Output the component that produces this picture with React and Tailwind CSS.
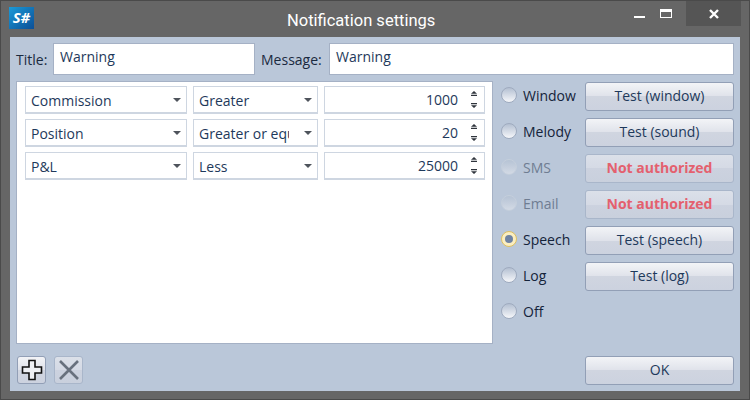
const rows = [
  { field: "Commission", op: "Greater", value: "1000" },
  { field: "Position", op: "Greater or equ", value: "20" },
  { field: "P&L", op: "Less", value: "25000" },
];

const channels = [
  { label: "Window", button: "Test (window)" },
  { label: "Melody", button: "Test (sound)" },
  { label: "SMS", button: "Not authorized", disabled: true },
  { label: "Email", button: "Not authorized", disabled: true },
  { label: "Speech", button: "Test (speech)", checked: true },
  { label: "Log", button: "Test (log)" },
  { label: "Off" },
];

function Caret() {
  return <span className="w-0 h-0 border-x-[4px] border-x-transparent border-t-[4px] border-t-[#4f545c] shrink-0" />;
}

function Select({ text, className }) {
  return (
    <div className={`h-[28px] flex items-center bg-white border border-[#ced6e1] border-b-2 pl-[5px] pr-[5px] ${className}`}>
      <span className="flex-1 overflow-hidden whitespace-nowrap text-[#1e395b] pt-[1px]">{text}</span>
      <span className="w-[15px] shrink-0" />
      <Caret />
    </div>
  );
}

function Spinner({ value }) {
  return (
    <div className="w-[161px] h-[28px] flex items-center bg-white border border-[#ced6e1] border-b-2 pr-[6px] text-[#1e395b]">
      <span className="flex-1 text-right pr-[12px]">{value}</span>
      <div className="flex flex-col items-center gap-[7px]">
        <svg width="8" height="5" viewBox="0 0 8 5"><path d="M4 0L7 2.8H1Z M1 3.8H7V5H1Z" fill="#2f343c" /></svg>
        <svg width="8" height="5" viewBox="0 0 8 5"><path d="M1 0H7V1.2H1Z M1 2.2H7L4 5Z" fill="#2f343c" /></svg>
      </div>
    </div>
  );
}

function Radio({ checked, disabled }) {
  return (
    <span
      className={`w-[16px] h-[16px] mt-[5px] rounded-full flex items-center justify-center shrink-0 border ${
        checked
          ? "border-[#dcbf62] bg-[#fbeec0]"
          : disabled
          ? "border-[#c5cfdc] bg-gradient-to-b from-[#b6c3d5] to-[#d3dae5]"
          : "border-[#9fabbf] bg-gradient-to-b from-[#b4c0d2] to-[#f6f7fa]"
      }`}
    >
      {checked && <span className="w-[8px] h-[8px] rounded-full bg-[#6f83a3]" />}
    </span>
  );
}

function Button({ children, disabled, danger }) {
  return (
    <button
      className={`w-[149px] h-[29px] pb-[2px] rounded-[3px] border leading-none ${
        disabled
          ? "border-[#a9b6ca] bg-[linear-gradient(#dbe0e9,#d5dae5_50%,#ccd2df_50%,#c9d0dd)]"
          : "border-[#929fb6] bg-[linear-gradient(#f3f4f7,#dfe2ea_50%,#d0d5e0_50%,#ccd2df)]"
      } ${danger ? "text-[#e4606e] font-bold" : "text-[#1e395b]"}`}
    >
      {children}
    </button>
  );
}

function Field({ value, className }) {
  return (
    <div className={`h-[32px] bg-white border border-[#a5b1c5] pl-[6px] pt-[2px] text-[#1e395b] ${className}`}>
      {value}
    </div>
  );
}

export default function App() {
  return (
    <div className="w-[750px] h-[400px] bg-[#666666] border border-[#4a4a4a] text-[14px] flex flex-col font-['Open_Sans','Noto_Sans',sans-serif] overflow-hidden">
      <header className="h-[36px] shrink-0 flex">
        <div className="w-[286px] pl-[8px] pt-[6px]">
          <div className="w-[25px] h-[22px] bg-gradient-to-br from-[#1c9ad8] to-[#0d4f96] text-white font-bold italic text-[15px] leading-[20px] text-center">
            S#
          </div>
        </div>
        <h1 className="font-['Roboto',sans-serif] text-[16.5px] leading-[40px] text-white">Notification settings</h1>
        <div className="flex-1 flex justify-end items-start pr-[8px]">
          <div className="w-[32px] h-[25px] flex items-center justify-center pt-[6px]">
            <span className="w-[11px] h-[2px] bg-white" />
          </div>
          <div className="w-[22px] h-[25px] flex items-center justify-center mr-[9px]">
            <span className="w-[12px] h-[9px] border border-white border-t-[3px]" />
          </div>
          <div className="w-[55px] h-[25px] bg-[#555555] flex items-center justify-center">
            <svg width="10" height="10" viewBox="0 0 10 10"><path d="M1 1L9 9M9 1L1 9" stroke="white" strokeWidth="2.4" /></svg>
          </div>
        </div>
      </header>

      <main className="mx-[9px] h-[354px] bg-[#bac7d9] p-[6px] flex flex-col gap-[6px] text-[#1a2a3f]">
        <div className="flex items-center">
          <span className="w-[37px]">Title:</span>
          <Field value="Warning" className="w-[202px]" />
          <span className="w-[74px] pl-[6px]">Message:</span>
          <Field value="Warning" className="flex-1" />
        </div>

        <div className="flex flex-1">
          <div className="w-[477px] flex flex-col">
            <div className="h-[263px] bg-white border border-[#a5b1c5] pl-[8px] pt-[4px] flex flex-col gap-[5px]">
              {rows.map((row) => (
                <div key={row.field} className="flex gap-[6px]">
                  <Select text={row.field} className="w-[162px]" />
                  <Select text={row.op} className="w-[125px]" />
                  <Spinner value={row.value} />
                </div>
              ))}
            </div>
            <div className="flex gap-[8px] pl-[1px] pt-[12px]">
              <button className="w-[29px] h-[28px] rounded-[3px] border border-[#929fb6] bg-[linear-gradient(#f3f4f7,#dfe2ea_50%,#d0d5e0_50%,#ccd2df)] flex items-center justify-center">
                <svg width="22" height="22" viewBox="0 0 22 22">
                  <path d="M8 1.5H14V8H20.5V14H14V20.5H8V14H1.5V8H8Z" fill="#eef0f4" stroke="#111" strokeWidth="1.6" />
                </svg>
              </button>
              <button className="w-[29px] h-[28px] rounded-[3px] border border-[#a9b6ca] bg-[linear-gradient(#dbe0e9,#d5dae5_50%,#ccd2df_50%,#c9d0dd)] flex items-center justify-center">
                <svg width="22" height="22" viewBox="0 0 22 22">
                  <path d="M2 2L20 20M20 2L2 20" stroke="#68717e" strokeWidth="2.6" />
                </svg>
              </button>
            </div>
          </div>

          <div className="flex-1 flex flex-col pl-[8px] pt-[1px]">
            <div className="flex flex-col gap-[7px]">
              {channels.map((c) => (
                <div key={c.label} className="h-[29px] flex items-start">
                  <Radio checked={c.checked} disabled={c.disabled} />
                  <span className={`w-[68px] pl-[6px] pt-[3px] ${c.disabled ? "text-[#6f7d92]" : "text-[#14233a]"}`}>{c.label}</span>
                  {c.button && (
                    <Button disabled={c.disabled} danger={c.disabled}>
                      {c.button}
                    </Button>
                  )}
                </div>
              ))}
            </div>
            <div className="mt-auto flex justify-end">
              <Button>OK</Button>
            </div>
          </div>
        </div>
      </main>
    </div>
  );
}
